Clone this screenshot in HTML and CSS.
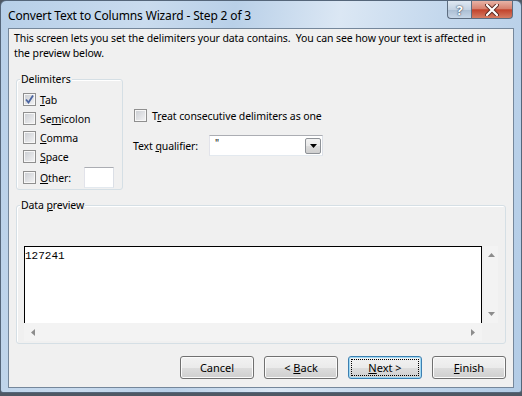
FILE: index.html
```html
<!DOCTYPE html>
<html lang="en">
<head>
    <meta charset="UTF-8">
    <title>Convert Text to Columns Wizard - Step 2 of 3</title>
    <link rel="stylesheet" href="styles.css">
</head>
<body>
    <div class="window">
        <div class="titlebar">
            <span class="title">Convert Text to Columns Wizard - Step 2 of 3</span>
            <div class="caption-buttons">
                <span class="cap-btn help">?</span>
                <span class="cap-btn close">
                    <svg width="14" height="12" viewBox="0 0 14 12">
                        <path d="M2 1 L12 11 M12 1 L2 11" stroke="#5a2a22" stroke-width="4" stroke-linecap="round"/>
                        <path d="M2 1 L12 11 M12 1 L2 11" stroke="#fff" stroke-width="2.2" stroke-linecap="round"/>
                    </svg>
                </span>
            </div>
        </div>

        <div class="client">
            <p class="intro">This screen lets you set the delimiters your data contains.&nbsp; You can see how your text is affected in<br>the preview below.</p>

            <div class="options">
                <div class="group delimiters">
                    <div class="group-title">Delimiters</div>
                    <div class="check-list">
                        <div class="check-row">
                            <span class="check">
                                <svg width="9" height="9" viewBox="0 0 9 9">
                                    <path d="M1 4.5 L3.5 7.5 L8 0.5" fill="none" stroke="#4a64a0" stroke-width="1.8"/>
                                </svg>
                            </span>
                            <span><u>T</u>ab</span>
                        </div>
                        <div class="check-row"><span class="check"></span><span>Se<u>m</u>icolon</span></div>
                        <div class="check-row"><span class="check"></span><span><u>C</u>omma</span></div>
                        <div class="check-row"><span class="check"></span><span><u>S</u>pace</span></div>
                        <div class="check-row other-row">
                            <span class="check"></span><span><u>O</u>ther:</span>
                            <span class="textbox other-box"></span>
                        </div>
                    </div>
                </div>

                <div class="side">
                    <div class="check-row"><span class="check"></span><span>T<u>r</u>eat consecutive delimiters as one</span></div>
                    <div class="qualifier-row">
                        <span>Text <u>q</u>ualifier:</span>
                        <div class="combo textbox">
                            <span class="combo-text">"</span>
                            <span class="combo-btn">
                                <svg width="7" height="4" viewBox="0 0 7 4"><path d="M0 0 H7 L3.5 4 Z" fill="#000"/></svg>
                            </span>
                        </div>
                    </div>
                </div>
            </div>

            <div class="group preview">
                <div class="group-title">Data <u>p</u>review</div>
                <div class="grid">
                    <div class="grid-main">
                        <div class="grid-cells">127241</div>
                        <div class="hscroll">
                            <svg width="4" height="7" viewBox="0 0 4 7"><path d="M4 0 V7 L0 3.5 Z" fill="#8c8c8c"/></svg>
                            <svg width="4" height="7" viewBox="0 0 4 7"><path d="M0 0 V7 L4 3.5 Z" fill="#8c8c8c"/></svg>
                        </div>
                    </div>
                    <div class="vscroll">
                        <svg width="7" height="4" viewBox="0 0 7 4"><path d="M0 4 H7 L3.5 0 Z" fill="#8c8c8c"/></svg>
                        <svg width="7" height="4" viewBox="0 0 7 4"><path d="M0 0 H7 L3.5 4 Z" fill="#8c8c8c"/></svg>
                    </div>
                </div>
            </div>

            <div class="buttons">
                <button class="btn">Cancel</button>
                <button class="btn">&lt; <u>B</u>ack</button>
                <button class="btn default"><u>N</u>ext &gt;</button>
                <button class="btn"><u>F</u>inish</button>
            </div>
        </div>
    </div>
</body>
</html>
```

FILE: styles.css
```css
body {
    margin: 0;
    width: 522px;
    height: 396px;
    overflow: hidden;
    background-color: #4f5864;
    font-family: "Noto Sans", "Open Sans", sans-serif;
    font-size: 10.5px;
    letter-spacing: -0.1px;
    color: #000;
}
u {
    text-decoration-thickness: 1px;
    text-underline-offset: 1px;
}
.window {
    width: 522px;
    height: 393px;
    box-sizing: border-box;
    border: 1px solid #55667a;
    border-radius: 6px 6px 3px 3px;
    padding: 0 7px 4px 6px;
    background: linear-gradient(100deg, #b7cfe8 0%, #c9dbee 25%, #b9d0e8 40%, #dbe7f4 58%, #c4d8ed 75%, #b3cce6 100%);
    display: flex;
    flex-direction: column;
}
.titlebar {
    height: 27px;
    display: flex;
    justify-content: space-between;
    align-items: flex-start;
}
.title {
    font-size: 12px;
    letter-spacing: -0.15px;
    margin: 6px 0 0 1px;
    color: #000;
}
.caption-buttons {
    display: flex;
    margin-right: 1px;
}
.cap-btn {
    height: 18px;
    display: flex;
    align-items: center;
    justify-content: center;
    box-sizing: border-box;
    border: 1px solid #5d6d80;
    border-top: none;
}
.help {
    width: 24px;
    border-radius: 0 0 0 4px;
    border-right: none;
    background: linear-gradient(#dfe8f2, #c4d3e3 50%, #aabdd2 51%, #c6d6e7);
    color: #fff;
    font-weight: bold;
    font-size: 13px;
    text-shadow: 0 0 2px #34465a, 0 0 1px #34465a;
}
.close {
    width: 42px;
    border-radius: 0 0 4px 0;
    background: linear-gradient(#e8b3a6, #d7826f 45%, #c2432c 52%, #d57c63);
}
.client {
    flex: 1;
    margin-left: 1px;
    border: 1px solid #75879b;
    background-color: #f0f0f0;
    padding: 0 7px 8px 7px;
    display: flex;
    flex-direction: column;
}
.intro {
    margin: 2px 0 0 -2px;
    line-height: 15px;
    white-space: nowrap;
}
.options {
    display: flex;
    margin-top: 18px;
}
.group {
    border: 1px solid #d5dfe5;
    border-radius: 3px;
    box-shadow: inset 1px 1px 0 #fff;
}
.group-title {
    display: table;
    margin: -8px 0 0 3px;
    padding: 0 1px;
    line-height: 15px;
    background-color: #f0f0f0;
}
.delimiters {
    width: 105px;
    height: 109px;
}
.check-list {
    padding: 3px 0 0 6px;
}
.check-row {
    height: 19px;
    display: flex;
    align-items: center;
    gap: 4px;
}
.other-row {
    margin-top: 2px;
}
.check {
    width: 13px;
    height: 13px;
    box-sizing: border-box;
    border: 1px solid #8f8f8f;
    background: linear-gradient(135deg, #c9ccd1, #f4f4f5);
    box-shadow: inset 0 0 0 1px #f7f7f7;
    display: flex;
    align-items: center;
    justify-content: center;
    flex: none;
}
.textbox {
    box-sizing: border-box;
    background-color: #fff;
    border: 1px solid #abadb3;
    border-color: #abadb3 #dbdfe6 #e3e9ef #e2e3ea;
}
.other-box {
    width: 30px;
    height: 21px;
    margin-left: 9px;
}
.side {
    margin: 27px 0 0 11px;
    display: flex;
    flex-direction: column;
    gap: 10px;
}
.side .check-row {
    gap: 5px;
}
.qualifier-row {
    display: flex;
    align-items: center;
    gap: 11px;
    margin-left: -1px;
}
.combo {
    width: 114px;
    height: 21px;
    display: flex;
    justify-content: space-between;
    align-items: center;
    padding: 0 1px 0 5px;
}
.combo-text {
    font-size: 10px;
    align-self: flex-start;
}
.combo-btn {
    width: 16px;
    height: 16px;
    box-sizing: border-box;
    border: 1px solid #8e9297;
    border-radius: 2px;
    background: linear-gradient(#f3f3f3, #e9e9e9 50%, #dcdcdc 51%, #cfcfcf);
    display: flex;
    align-items: center;
    justify-content: center;
}
.preview {
    margin-top: 15px;
    height: 139px;
    box-sizing: border-box;
}
.grid {
    display: flex;
    margin: 33px 7px 0 7px;
}
.grid-main {
    width: 459px;
}
.grid-cells {
    height: 76px;
    border: 1px solid #000;
    border-bottom: none;
    background-color: #fff;
    font-family: "Liberation Mono", monospace;
    font-size: 11px;
    letter-spacing: 0;
    line-height: 18px;
}
.hscroll {
    height: 18px;
    background-color: #f3f3f3;
    display: flex;
    justify-content: space-between;
    align-items: center;
    padding: 0 7px;
}
.vscroll {
    width: 14px;
    height: 77px;
    margin-left: 2px;
    background-color: #f3f3f3;
    display: flex;
    flex-direction: column;
    justify-content: space-between;
    align-items: center;
    padding: 7px 0;
    box-sizing: border-box;
}
.buttons {
    display: flex;
    justify-content: flex-end;
    gap: 10px;
    margin-top: auto;
}
.btn {
    width: 74px;
    height: 23px;
    border: 1px solid #707070;
    border-radius: 3px;
    background: linear-gradient(#f2f2f2, #ebebeb 50%, #dddddd 51%, #cfcfcf);
    box-shadow: inset 0 0 0 1px #fbfbfb;
    font-family: "Noto Sans", "Open Sans", sans-serif;
    font-size: 11px;
    color: #000;
    padding: 0;
}
.btn.default {
    border-color: #3c7fb1;
    box-shadow: inset 0 0 0 1px #9fd9f4;
    outline: 1px dotted #000;
    outline-offset: -4px;
}
```
